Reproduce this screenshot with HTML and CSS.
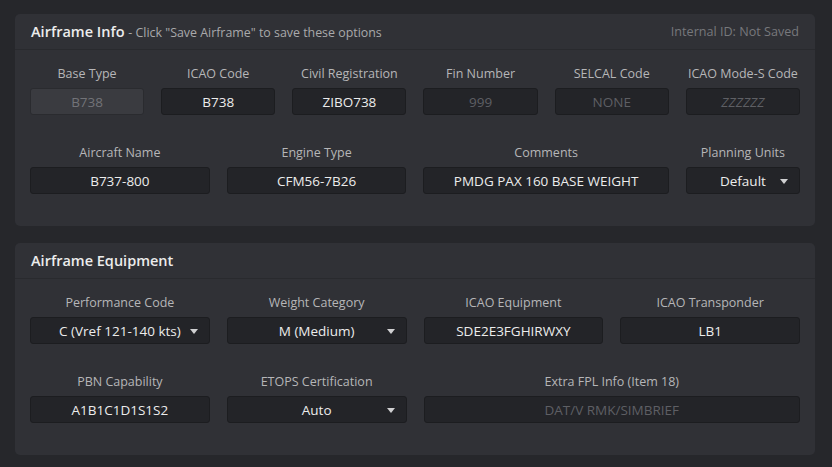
FILE: index.html
```html
<!DOCTYPE html>
<html lang="en">
<head>
    <meta charset="UTF-8">
    <meta name="viewport" content="width=device-width, initial-scale=1.0">
    <title>Airframe</title>
    <link rel="stylesheet" href="styles.css">
</head>
<body>
    <div class="panel">
        <div class="panel-head">
            <h2>Airframe Info <small>- Click "Save Airframe" to save these options</small></h2>
            <span class="internal-id">Internal ID: Not Saved</span>
        </div>
        <div class="panel-body form-grid">
            <div class="field span-2">
                <label>Base Type</label>
                <input type="text" value="B738" disabled>
            </div>
            <div class="field span-2">
                <label>ICAO Code</label>
                <input type="text" value="B738">
            </div>
            <div class="field span-2">
                <label>Civil Registration</label>
                <input type="text" value="ZIBO738">
            </div>
            <div class="field span-2">
                <label>Fin Number</label>
                <input type="text" placeholder="999">
            </div>
            <div class="field span-2">
                <label>SELCAL Code</label>
                <input type="text" placeholder="NONE">
            </div>
            <div class="field span-2">
                <label>ICAO Mode-S Code</label>
                <input type="text" placeholder="ZZZZZZ" class="italic">
            </div>

            <div class="field span-3">
                <label>Aircraft Name</label>
                <input type="text" value="B737-800">
            </div>
            <div class="field span-3">
                <label>Engine Type</label>
                <input type="text" value="CFM56-7B26">
            </div>
            <div class="field span-4">
                <label>Comments</label>
                <input type="text" value="PMDG PAX 160 BASE WEIGHT">
            </div>
            <div class="field span-2">
                <label>Planning Units</label>
                <div class="select"><select><option>Default</option></select></div>
            </div>
        </div>
    </div>

    <div class="panel">
        <div class="panel-head">
            <h2>Airframe Equipment</h2>
        </div>
        <div class="panel-body form-grid">
            <div class="field span-3">
                <label>Performance Code</label>
                <div class="select"><select><option>C (Vref 121-140 kts)</option></select></div>
            </div>
            <div class="field span-3">
                <label>Weight Category</label>
                <div class="select"><select><option>M (Medium)</option></select></div>
            </div>
            <div class="field span-3">
                <label>ICAO Equipment</label>
                <input type="text" value="SDE2E3FGHIRWXY">
            </div>
            <div class="field span-3">
                <label>ICAO Transponder</label>
                <input type="text" value="LB1">
            </div>

            <div class="field span-3">
                <label>PBN Capability</label>
                <input type="text" value="A1B1C1D1S1S2">
            </div>
            <div class="field span-3">
                <label>ETOPS Certification</label>
                <div class="select"><select><option>Auto</option></select></div>
            </div>
            <div class="field span-6">
                <label>Extra FPL Info (Item 18)</label>
                <input type="text" placeholder="DAT/V RMK/SIMBRIEF">
            </div>
        </div>
    </div>
</body>
</html>
```

FILE: styles.css
```css
body {
    margin: 0;
    padding: 14px 17px 0 15px;
    background-color: #26272b;
    font-family: "Open Sans", "Noto Sans", sans-serif;
    color: #e6e6e6;
}
.panel {
    background-color: #303136;
    border-radius: 5px;
    margin-bottom: 17px;
}
.panel-head {
    display: flex;
    justify-content: space-between;
    align-items: center;
    height: 35px;
    padding: 0 16px;
    border-bottom: 1px solid #292a2e;
}
.panel-head h2 {
    margin: 0;
    font-size: 14.5px;
    font-weight: 600;
    color: #ececec;
}
.panel-head h2 small {
    font-size: 12.4px;
    font-weight: 400;
    color: #a9a9ab;
}
.internal-id {
    font-size: 12.6px;
    color: #77787c;
}
.panel-body {
    padding: 15px 15px 32px 15px;
}
.form-grid {
    display: grid;
    grid-template-columns: repeat(12, 1fr);
    column-gap: 17px;
    row-gap: 29px;
}
.span-2 { grid-column: span 2; }
.span-3 { grid-column: span 3; }
.span-4 { grid-column: span 4; }
.span-6 { grid-column: span 6; }
.field {
    display: flex;
    flex-direction: column;
    text-align: center;
}
.field label {
    font-size: 12.5px;
    line-height: 18px;
    color: #b6b6b8;
    margin-bottom: 5px;
    white-space: nowrap;
}
.field input,
.field select {
    box-sizing: border-box;
    width: 100%;
    height: 27px;
    margin: 0;
    padding: 0 6px;
    border: 1px solid #1c1d20;
    border-radius: 3px;
    background-color: #232428;
    color: #ececec;
    font-family: inherit;
    font-size: 13.5px;
    text-align: center;
    outline: none;
}
.field input::placeholder {
    color: #5e5f64;
}
.field input.italic::placeholder {
    font-style: italic;
}
.field input:disabled {
    background-color: #3a3b40;
    border-color: #2a2b2f;
    color: #727378;
}
.select {
    position: relative;
}
.field select {
    appearance: none;
    -webkit-appearance: none;
    text-align-last: center;
}
.select::after {
    content: "";
    position: absolute;
    right: 12px;
    top: 12px;
    border-left: 4px solid transparent;
    border-right: 4px solid transparent;
    border-top: 5px solid #d0d0d2;
    pointer-events: none;
}
```
